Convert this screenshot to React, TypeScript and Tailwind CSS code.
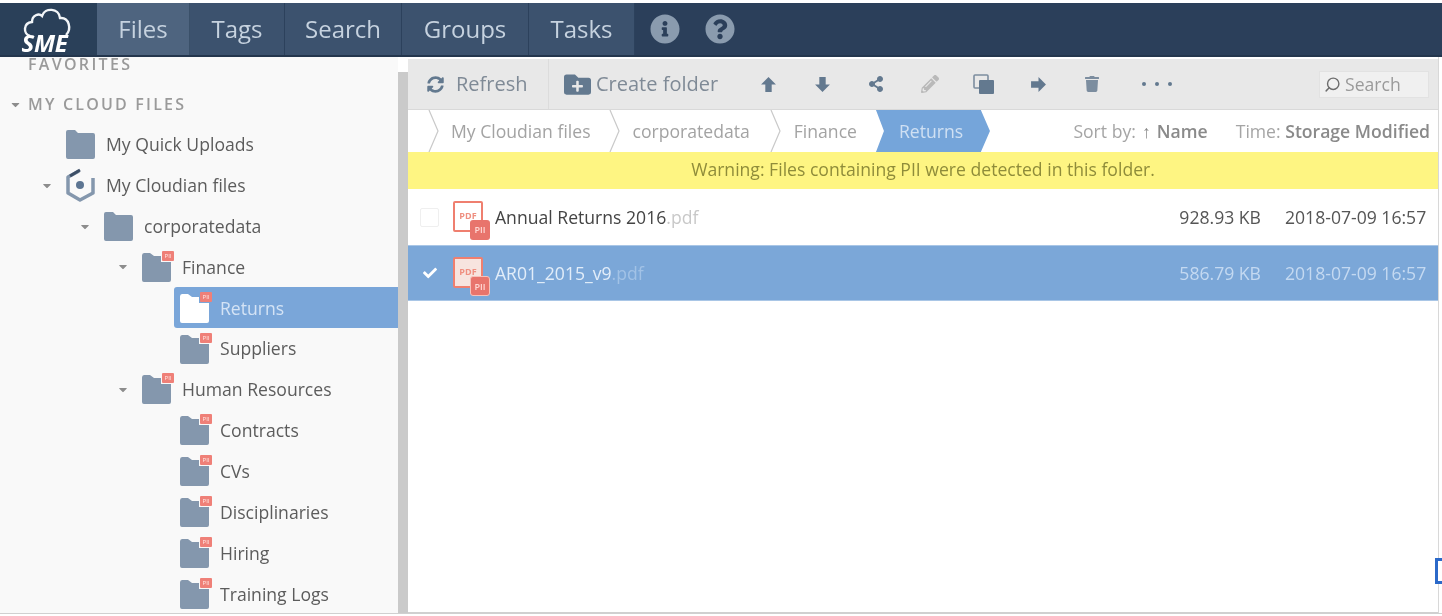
import React from "react";
import {
  FaSyncAlt, FaFolderPlus, FaShareAlt, FaPencilAlt,
  FaTrash, FaInfoCircle, FaQuestionCircle, FaCheck, FaCaretDown,
} from "react-icons/fa";
import { Search } from "lucide-react";

function Folder({ pii, white }: { pii?: boolean; white?: boolean }) {
  const c = white ? "#ffffff" : "#8497ad";
  return (
    <span className="relative block w-[30px] h-[30px] shrink-0">
      <svg width="30" height="30" viewBox="0 0 30 30" className="block">
        {pii ? (
          <path d="M1 3.5 Q1 1 3 1 H9 L13 4 H20 V10 H30 V28 Q30 30 28 30 H3 Q1 30 1 28 Z" fill={c} />
        ) : (
          <path d="M1 3 Q1 1 3 1 H10 L13 4 H28 Q30 4 30 6 V28 Q30 30 28 30 H3 Q1 30 1 28 Z" fill={c} />
        )}
      </svg>
      {pii && (
        <span className="absolute left-[21px] top-[-1px] w-[12px] h-[10px] bg-[#ef8078] rounded-[1px] text-[6px] leading-[10px] text-center text-[#ffe9e6]">
          PII
        </span>
      )}
    </span>
  );
}

function Hex() {
  return (
    <svg width="30" height="34" viewBox="0 0 30 34" className="block shrink-0">
      <path d="M14 3 L3 9 V25 L15 32 L28 25 V10" fill="none" stroke="#8497ad" strokeWidth="3.5" strokeLinejoin="round" />
      <path d="M15 2 L5 8" fill="none" stroke="#3d4f66" strokeWidth="3" />
      <circle cx="15" cy="17" r="4" fill="#5d7592" />
    </svg>
  );
}

function TreeRow({ label, pad, caret, pii, icon }: { label: string; pad: string; caret?: boolean; pii?: boolean; icon?: React.ReactNode }) {
  return (
    <div className={`h-[40.85px] flex items-center ${pad}`}>
      <span className="w-[12px] mr-[12px] shrink-0 flex justify-center">
        {caret && <FaCaretDown className="text-[#8d8d8d] text-[13px]" />}
      </span>
      {icon ?? <Folder pii={pii} />}
      <span className="ml-[11px] text-[17.6px] text-[#5c5c5c] whitespace-nowrap">{label}</span>
    </div>
  );
}

function Chevron() {
  return (
    <svg width="11" height="42" viewBox="0 0 11 42" className="block shrink-0">
      <path d="M1 0 L10 21 L1 42" fill="none" stroke="#c9c9c9" strokeWidth="1.2" />
    </svg>
  );
}

function BlockArrow({ rotate }: { rotate: string }) {
  return (
    <svg width="17" height="17" viewBox="0 0 16 16" className={`block ${rotate}`}>
      <path d="M8 1 L15 8 H11 V15 H5 V8 H1 Z" fill="#63798f" />
    </svg>
  );
}

function CloneIcon() {
  return (
    <svg width="22" height="21" viewBox="0 0 22 21" className="block">
      <rect x="1" y="1" width="14" height="13" rx="1" fill="none" stroke="#7c8d9f" strokeWidth="1.6" />
      <rect x="6" y="6" width="15" height="14" rx="1" fill="#63798f" />
    </svg>
  );
}

function PdfIcon({ selected }: { selected?: boolean }) {
  return (
    <span className="relative block w-[38px] h-[38px] shrink-0">
      <span className={`absolute left-[1px] top-0 w-[30px] h-[31px] border-2 border-[#ef7f6f] rounded-[2px] text-[9px] font-bold leading-[26px] text-center text-[#ef8f80] ${selected ? "bg-[#f7e4df]" : "bg-white"}`}>
        PDF
      </span>
      <span className={`absolute left-[18px] top-[19px] w-[20px] h-[20px] bg-[#e8746c] rounded-[3px] text-[9px] leading-[19px] text-center text-[#ffd9d5] font-semibold ${selected ? "border border-[#f6c1ba]" : ""}`}>
        PII
      </span>
    </span>
  );
}

function ToolIcon({ children, w }: { children: React.ReactNode; w: string }) {
  return <span className={`flex justify-center shrink-0 ${w}`}>{children}</span>;
}

export default function App() {
  return (
    <div className="relative w-[1442px] h-[616px] overflow-hidden bg-white flex flex-col pt-[3px] blur-[0.7px] font-['Open_Sans',sans-serif]">
      {/* Top bar */}
      <header className="h-[54px] shrink-0 flex bg-[#2b3f5a] text-[#c6d2df] text-[24px] border-b-2 border-[#24364d]">
        <div className="w-[97px] flex items-center justify-center bg-[#2a4059] pr-[2px]">
          <span className="relative block w-[52px] h-[50px]">
            <svg width="52" height="38" viewBox="0 0 52 38" className="absolute left-0 top-0">
              <path d="M8 32 C1 30 1 19 10 18 C10 11 17 9 20 12 C23 3 37 4 38 14 C47 13 50 25 44 31" fill="none" stroke="#f2f5f8" strokeWidth="2.4" />
            </svg>
            <span className="absolute left-[0px] top-[29px] text-[24px] leading-[20px] font-bold italic text-white tracking-[-0.3px]">SME</span>
          </span>
        </div>
        <div className="w-[93px] flex items-center justify-center bg-[#4e647f] border-r border-[#3a5069]">Files</div>
        <div className="w-[95px] flex items-center justify-center bg-[#3c526e] border-r border-[#2c415c]">Tags</div>
        <div className="w-[117px] flex items-center justify-center bg-[#3c526e] border-r border-[#2c415c]">Search</div>
        <div className="w-[127px] flex items-center justify-center bg-[#3c526e] border-r border-[#2c415c]">Groups</div>
        <div className="w-[106px] flex items-center justify-center bg-[#3c526e] border-r border-[#2c415c]">Tasks</div>
        <div className="flex items-center pl-[15px] gap-[25px] text-[#8a9bae] text-[30px]">
          <FaInfoCircle />
          <FaQuestionCircle />
        </div>
      </header>

      <div className="flex-1 flex min-h-0 pb-[3px] pr-[3px]">
        {/* Sidebar */}
        <aside className="w-[398px] shrink-0 bg-[#f9f9f9] overflow-hidden">
          <div className="mt-[-3px] h-[20px] pl-[28px] text-[16px] leading-[20px] font-semibold tracking-[2.3px] text-[#9a9a9a]">FAVORITES</div>
          <div className="mt-[15px] h-[30px] flex items-center pl-[9px] text-[16px] font-semibold tracking-[2.2px] text-[#9a9a9a]">
            <FaCaretDown className="text-[13px] w-[13px] mr-[6px] text-[#8d8d8d]" />
            MY CLOUD FILES
          </div>
          <div className="mt-[5px]">
            <TreeRow label="My Quick Uploads" pad="pl-[41px]" />
            <TreeRow label="My Cloudian files" pad="pl-[41px]" caret icon={<Hex />} />
            <TreeRow label="corporatedata" pad="pl-[79px]" caret />
            <TreeRow label="Finance" pad="pl-[117px]" caret pii />
            <div className="ml-[174px] h-[40.85px] flex items-center pl-[5px] bg-[#7aa6d9] rounded-l-[3px]">
              <Folder pii white />
              <span className="ml-[11px] text-[17.6px] text-[#d4e3f5]">Returns</span>
            </div>
            <TreeRow label="Suppliers" pad="pl-[155px]" pii />
            <TreeRow label="Human Resources" pad="pl-[117px]" caret pii />
            <TreeRow label="Contracts" pad="pl-[155px]" pii />
            <TreeRow label="CVs" pad="pl-[155px]" pii />
            <TreeRow label="Disciplinaries" pad="pl-[155px]" pii />
            <TreeRow label="Hiring" pad="pl-[155px]" pii />
            <TreeRow label="Training Logs" pad="pl-[155px]" pii />
          </div>
        </aside>
        {/* Scrollbar */}
        <div className="w-[10px] shrink-0 bg-[#cacaca] mt-[15px]" />

        {/* Main */}
        <main className="flex-1 min-w-0 flex flex-col border-r border-[#d8d8d8] pt-[2px]">
          <div className="h-[51px] shrink-0 flex items-center bg-[#e8e8e8] border-b border-[#d9d9d9] text-[20px] text-[#7f8a96]">
            <div className="w-[141px] h-full flex items-center pl-[19px] border-r border-[#dcdcdc] shrink-0">
              <FaSyncAlt className="text-[17px] text-[#63798f] mr-[12px]" />
              Refresh
            </div>
            <div className="flex items-center pl-[15px] shrink-0 w-[190px]">
              <FaFolderPlus className="text-[27px] text-[#63798f] mr-[5px]" />
              Create folder
            </div>
            <div className="flex items-center text-[#63798f] text-[16px] ml-[2px]">
              <ToolIcon w="w-[54px]"><BlockArrow rotate="" /></ToolIcon>
              <ToolIcon w="w-[54px]"><BlockArrow rotate="rotate-180" /></ToolIcon>
              <ToolIcon w="w-[54px]"><FaShareAlt /></ToolIcon>
              <ToolIcon w="w-[54px]"><FaPencilAlt className="text-[#b9b9b9] text-[18px]" /></ToolIcon>
              <ToolIcon w="w-[54px]"><CloneIcon /></ToolIcon>
              <ToolIcon w="w-[54px]"><BlockArrow rotate="rotate-90" /></ToolIcon>
              <ToolIcon w="w-[54px]"><FaTrash className="text-[#7c8d9f]" /></ToolIcon>
              <span className="ml-[23px] flex gap-[9px]">
                <span className="w-[4px] h-[4px] rounded-full bg-[#63798f]" />
                <span className="w-[4px] h-[4px] rounded-full bg-[#63798f]" />
                <span className="w-[4px] h-[4px] rounded-full bg-[#63798f]" />
              </span>
            </div>
            <div className="ml-auto mr-[9px] w-[110px] h-[27px] flex items-center bg-[#f0f0f0] border border-[#e2e2e2] pl-[4px] text-[17.6px] text-[#9a9a9a]">
              <Search className="w-[17px] h-[17px] -scale-x-100 text-[#6c6c6c] mr-[4px]" />
              Search
            </div>
          </div>

          <div className="h-[42px] shrink-0 flex items-center pl-[20px] text-[17.6px] text-[#a3a3a3] bg-white">
            <Chevron />
            <span className="ml-[12px] mr-[18px]">My Cloudian files</span>
            <Chevron />
            <span className="ml-[13px] mr-[20px]">corporatedata</span>
            <Chevron />
            <span className="ml-[13px] mr-[19px]">Finance</span>
            <span className="w-[114px] h-[42px] flex items-center pl-[23px] bg-[#75a5da] text-[#cfe0f3] [clip-path:polygon(0_0,92%_0,100%_50%,92%_100%,0_100%,7%_50%)]">Returns</span>
            <span className="ml-auto text-[17.6px] text-[#a5a5a5] mr-[8px] whitespace-nowrap">
              Sort by: <span className="text-[#8a8a8a] font-semibold"><span className="mx-[1.5px]">↑</span> Name</span>
              <span className="ml-[28px]">Time: </span>
              <span className="text-[#8a8a8a] font-semibold">Storage Modified</span>
            </span>
          </div>

          <div className="h-[37px] shrink-0 flex items-center justify-center bg-[#fef582] text-[17.6px] text-[#8f8c3a] pb-[2px]">
            Warning: Files containing PII were detected in this folder.
          </div>

          <div className="h-[56px] shrink-0 flex items-center bg-white text-[17.6px] text-[#555]">
            <span className="ml-[12px] w-[19px] h-[19px] border border-[#efefef] rounded-[2px] shrink-0" />
            <span className="ml-[13px] mt-[5px]"><PdfIcon /></span>
            <span className="ml-[5px] text-[#444] whitespace-nowrap">Annual Returns 2016<span className="text-[#c8c8c8]">.pdf</span></span>
            <span className="ml-auto whitespace-nowrap">928.93 KB</span>
            <span className="ml-[24px] mr-[12px] w-[141px] text-right whitespace-nowrap">2018-07-09 16:57</span>
          </div>
          <div className="h-[56px] shrink-0 flex items-center bg-[#7ba7d8] border-y border-[#a9c6e6] text-[17.6px] text-[#c4d9f1]">
            <span className="ml-[12px] w-[19px] flex justify-center shrink-0 text-white text-[14px]"><FaCheck /></span>
            <span className="ml-[13px] mt-[5px]"><PdfIcon selected /></span>
            <span className="ml-[5px] text-[#e2edf9] whitespace-nowrap">AR01_2015_v9<span className="text-[#a2c2e6]">.pdf</span></span>
            <span className="ml-auto whitespace-nowrap">586.79 KB</span>
            <span className="ml-[24px] mr-[12px] w-[141px] text-right whitespace-nowrap">2018-07-09 16:57</span>
          </div>
          <div className="flex-1 bg-white border-b border-[#d0d0d0]" />
        </main>
      </div>
      <div className="absolute left-0 right-0 bottom-[2px] h-[1px] bg-[#d0d0d0]" />
      <div className="absolute left-[1435px] top-[558px] w-[12px] h-[26px] bg-white border-[3px] border-[#2b69c9]" />
    </div>
  );
}
